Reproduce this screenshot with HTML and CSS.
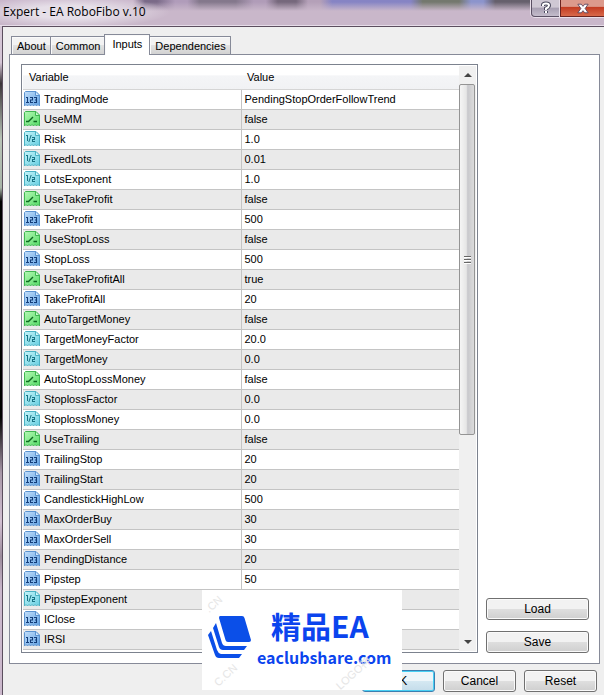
FILE: index.html
```html
<!DOCTYPE html>
<html lang="en">
<head>
<meta charset="utf-8">
<title>Expert - EA RoboFibo v.10</title>
<link rel="stylesheet" href="styles.css">
</head>
<body>
<svg class="defs" width="0" height="0" aria-hidden="true">
  <defs>
    <linearGradient id="g-int" x1="0" y1="0" x2="1" y2="1"><stop offset="0" stop-color="#c3dffa"/><stop offset="1" stop-color="#5fa0e2"/></linearGradient>
    <linearGradient id="g-bool" x1="0" y1="0" x2="1" y2="1"><stop offset="0" stop-color="#b4f7b4"/><stop offset="1" stop-color="#55dc66"/></linearGradient>
    <linearGradient id="g-dbl" x1="0" y1="0" x2="1" y2="1"><stop offset="0" stop-color="#c4f3f8"/><stop offset="1" stop-color="#66cfe2"/></linearGradient>
    <path id="sheet" d="M1.500 .5H12l3.500 3.500V15L14 13.500 12.500 15 11 13.500 9.500 15 8 13.500 6.500 15 5 13.500 3.500 15 2 13.500 .5 15V1.500Z"/>
    <symbol id="int" viewBox="0 0 16 16">
      <use href="#sheet" fill="url(#g-int)" stroke="#5b93d0"/>
      <path d="M11.500 1v3.500H15" fill="#d6eafd" stroke="#5b93d0"/>
      <path d="M2 6h2v5h1v1H2v-1h1V7H2ZM6 6h3v3.500H7V11h2v1H6V8.500h2V7H6ZM10 6h3v6h-3v-1h2V9.500h-1v-1h1V7h-2Z" fill="#123c78"/>
    </symbol>
    <symbol id="bool" viewBox="0 0 16 16">
      <use href="#sheet" fill="url(#g-bool)" stroke="#3fb652"/>
      <path d="M11.500 1v3.500H15" fill="#ccfbd0" stroke="#3fb652"/>
      <path d="M2 10.500h2.500L9 6M9.500 10.500H13" fill="none" stroke="#0c6a20" stroke-width="1.400"/>
    </symbol>
    <symbol id="dbl" viewBox="0 0 16 16">
      <use href="#sheet" fill="url(#g-dbl)" stroke="#4bb2c4"/>
      <path d="M11.500 1v3.500H15" fill="#d8f8fc" stroke="#4bb2c4"/>
      <path d="M2 4h2v6H3V5H2ZM8 6h3v3H9v1h2v1H8V8h2V7H8Z" fill="#187384"/><path d="M4.800 11L7.200 4" stroke="#187384" fill="none"/>
    </symbol>
  </defs>
</svg>
<div class="window">
  <header class="titlebar">
    <h1>Expert - EA RoboFibo v.10</h1>
    <div class="caption">
      <button class="help" aria-label="Help"><svg width="12" height="14" viewBox="0 0 12 14"><path d="M3 5V4Q3 2.500 6 2.500T9 4.500Q9 6 6 7.500V9M6 10v2" fill="none" stroke="#4a4a5e" stroke-width="4"/><path d="M3 5V4Q3 2.500 6 2.500T9 4.500Q9 6 6 7.500V9M6 10v2" fill="none" stroke="#fff" stroke-width="2"/></svg></button>
      <button class="close" aria-label="Close"><svg width="12" height="11" viewBox="0 0 14 12"><path d="M1 1h4l2 2.500L9 1h4L9.500 6 13 11H9L7 8.500 5 11H1L4.500 6Z" fill="#fff" stroke="#54405a"/></svg></button>
    </div>
  </header>
  <main class="client">
    <div class="tabs" role="tablist">
      <button role="tab">About</button>
      <button role="tab">Common</button>
      <button role="tab" class="active" aria-selected="true">Inputs</button>
      <button role="tab">Dependencies</button>
    </div>
    <section class="panel">
      <div class="list">
        <table>
          <thead><tr><th>Variable</th><th>Value</th></tr></thead>
          <tbody>
            <tr><td><svg><use href="#int"/></svg>TradingMode</td><td>PendingStopOrderFollowTrend</td></tr>
            <tr><td><svg><use href="#bool"/></svg>UseMM</td><td>false</td></tr>
            <tr><td><svg><use href="#dbl"/></svg>Risk</td><td>1.0</td></tr>
            <tr><td><svg><use href="#dbl"/></svg>FixedLots</td><td>0.01</td></tr>
            <tr><td><svg><use href="#dbl"/></svg>LotsExponent</td><td>1.0</td></tr>
            <tr><td><svg><use href="#bool"/></svg>UseTakeProfit</td><td>false</td></tr>
            <tr><td><svg><use href="#int"/></svg>TakeProfit</td><td>500</td></tr>
            <tr><td><svg><use href="#bool"/></svg>UseStopLoss</td><td>false</td></tr>
            <tr><td><svg><use href="#int"/></svg>StopLoss</td><td>500</td></tr>
            <tr><td><svg><use href="#bool"/></svg>UseTakeProfitAll</td><td>true</td></tr>
            <tr><td><svg><use href="#int"/></svg>TakeProfitAll</td><td>20</td></tr>
            <tr><td><svg><use href="#bool"/></svg>AutoTargetMoney</td><td>false</td></tr>
            <tr><td><svg><use href="#dbl"/></svg>TargetMoneyFactor</td><td>20.0</td></tr>
            <tr><td><svg><use href="#dbl"/></svg>TargetMoney</td><td>0.0</td></tr>
            <tr><td><svg><use href="#bool"/></svg>AutoStopLossMoney</td><td>false</td></tr>
            <tr><td><svg><use href="#dbl"/></svg>StoplossFactor</td><td>0.0</td></tr>
            <tr><td><svg><use href="#dbl"/></svg>StoplossMoney</td><td>0.0</td></tr>
            <tr><td><svg><use href="#bool"/></svg>UseTrailing</td><td>false</td></tr>
            <tr><td><svg><use href="#int"/></svg>TrailingStop</td><td>20</td></tr>
            <tr><td><svg><use href="#int"/></svg>TrailingStart</td><td>20</td></tr>
            <tr><td><svg><use href="#int"/></svg>CandlestickHighLow</td><td>500</td></tr>
            <tr><td><svg><use href="#int"/></svg>MaxOrderBuy</td><td>30</td></tr>
            <tr><td><svg><use href="#int"/></svg>MaxOrderSell</td><td>30</td></tr>
            <tr><td><svg><use href="#int"/></svg>PendingDistance</td><td>20</td></tr>
            <tr><td><svg><use href="#int"/></svg>Pipstep</td><td>50</td></tr>
            <tr><td><svg><use href="#dbl"/></svg>PipstepExponent</td><td></td></tr>
            <tr><td><svg><use href="#int"/></svg>IClose</td><td></td></tr>
            <tr><td><svg><use href="#int"/></svg>IRSI</td><td></td></tr>
          </tbody>
        </table>
        <div class="scrollbar">
          <button class="arrow" aria-label="Scroll up"><svg width="8" height="4" viewBox="0 0 8 4"><path d="M0 4L4 0l4 4Z" fill="#444"/></svg></button>
          <div class="track"><div class="thumb"><i></i><i></i><i></i></div></div>
          <button class="arrow" aria-label="Scroll down"><svg width="8" height="4" viewBox="0 0 8 4"><path d="M0 0h8L4 4Z" fill="#444"/></svg></button>
        </div>
      </div>
      <div class="side">
        <button class="btn">Load</button>
        <button class="btn">Save</button>
      </div>
    </section>
    <footer class="actions">
      <button class="btn default">OK</button>
      <button class="btn">Cancel</button>
      <button class="btn">Reset</button>
    </footer>
  </main>
  <aside class="badge">
    <svg width="44" height="44" viewBox="0 0 44 44" fill="#0b4fe8"><path d="M12 1H34q2 0 2.500 2L43 25q0 2-2 2H20q-2 0-2.500-2L11 3q0-2 1-2Z"/><path d="M8 8L14 28q1 3 4 3H39l-3 4H15q-3 0-4-3L5 13Z"/><path d="M3 16L9 35q1 3 4 4H34l-3 4H11q-3 0-4-3L0 20Z"/></svg>
    <div class="brand"><strong>精品EA</strong><span>eaclubshare.com</span></div>
    <small class="m1">.CN</small><small class="m2">C.CN</small><small class="m3">LOGO神</small>
  </aside>
</div>
</body>
</html>
```

FILE: styles.css
```css
* { box-sizing: border-box; }
body {
  margin: 0;
  font: 11px/14px "Liberation Sans", Arial, sans-serif;
  color: #000;
}
button { font: inherit; color: inherit; padding: 0; margin: 0; }
.defs { position: absolute; }
.window {
  position: relative;
  display: flex;
  flex-direction: column;
  min-height: 100vh;
  padding-left: 2px;
  background: linear-gradient(#d5c6d6 9%, #3a3438 12%, #b9c4b8 20%, #a8b4a8 27%, #000 29%, #000 60%, #a898a8 68%, #d2c0d2 75%, #9c8c9c 80%, #cbb8cc 85%);
}
.titlebar {
  display: flex;
  justify-content: space-between;
  height: 26px;
  margin-left: -2px;
  padding-left: 3px;
  border-bottom: 1px solid #e6dce8;
  background:
    radial-gradient(ellipse 100px 16px at 70px 12px, #e6dfe8 40%, transparent),
    linear-gradient(transparent 2px, #c9b7ca 11px),
    linear-gradient(90deg, #c9b6cb 0 22%, #7a6a88 24% 26%, #b09cba 29% 31%, #84788c 33% 39%, #b09cb8 42% 44%, #76687c 46% 49%, #b4a0b8 51% 53%, #8684c4 55% 68%, #74786e 70% 76%, #8c94cc 78% 80%, #66606c 82% 88%, #cfc2d2);
}
.titlebar h1 {
  margin: 3px 0 0;
  font: 12px/18px "Open Sans", sans-serif;
}
.caption { display: flex; height: 17px; }
.caption button {
  display: flex;
  align-items: center;
  justify-content: center;
  border: 1px solid #5a5064;
  border-top: 0;
  box-shadow: 0 0 0 1px #e8dfea;
}
.caption .help {
  width: 29px;
  border-radius: 0 0 0 4px;
  background: linear-gradient(#cfc8d4 45%, #a79fb2 50%, #c4bccb);
}
.caption .close {
  width: 44px;
  border-right: 0;
  border-color: #6a2420;
  background: linear-gradient(#dc9a8c 40%, #c23c22 45%, #d8694a);
}
.client {
  flex: 1;
  display: flex;
  flex-direction: column;
  border: solid #5b4e5e;
  border-width: 1px 0 0 1px;
  padding: 7px 4px 3px 6px;
  background: #efefef;
}
.tabs { display: flex; align-items: flex-end; padding-left: 2px; height: 20px; }
.tabs button {
  height: 18px;
  padding: 0 4px 0 5px;
  border: 1px solid #868a98;
  border-bottom: 0;
  box-shadow: inset 1px 1px #fafafa;
  background: linear-gradient(#f3f3f3 45%, #e2e2e2 50%, #d2d2d2);
}
.tabs button + button { margin-left: -1px; }
.tabs .active {
  position: relative;
  height: 21px;
  margin-bottom: -1px;
  padding: 0 7px 2px;
  background: #fff;
}
.panel {
  flex: 1;
  display: flex;
  gap: 8px;
  border: 1px solid #868a98;
  padding: 9px 10px 10px 11px;
  background: #fff;
}
.list {
  flex: 1;
  display: flex;
  border: 1px solid #7c828e;
  padding: 1px;
}
table {
  flex: 1;
  table-layout: fixed;
  border-collapse: collapse;
  align-self: flex-start;
}
th {
  height: 23px;
  padding: 0 6px;
  text-align: left;
  font-weight: 400;
  background: linear-gradient(#fff 40%, #f4f5f7 42%, #f1f2f4);
  border-bottom: 1px solid #d5d5d5;
}
th:first-child { width: 50%; }
td {
  height: 20px;
  padding: 0 3px;
  border-bottom: 1px solid #c4c4c4;
}
td + td { border-left: 1px solid #c4c4c4; }
tbody tr:nth-child(even) { background: #eaeaea; }
td svg { width: 16px; height: 16px; margin: 0 4px 0 -2px; vertical-align: -4px; }
.scrollbar {
  display: flex;
  flex-direction: column;
  width: 17px;
  background: #f0f0f0;
}
.arrow {
  display: flex;
  align-items: center;
  justify-content: center;
  height: 18px;
  border: 0;
  background: #f0f0f0;
}
.track { flex: 1; }
.thumb {
  display: flex;
  flex-direction: column;
  align-items: center;
  justify-content: center;
  gap: 1px;
  height: 64%;
  margin-right: 1px;
  border: 1px solid #949494;
  border-radius: 2px;
  background: linear-gradient(90deg, #f5f5f5, #e6e6e6 45%, #c8c8cc 55%, #dcdcdc);
}
.thumb i { width: 7px; height: 2px; background: #666; border-bottom: 1px solid #fff; }
.side {
  display: flex;
  flex-direction: column;
  justify-content: flex-end;
  gap: 11px;
  width: 103px;
}
.btn {
  height: 22px;
  font-size: 12px;
  border: 1px solid #707070;
  border-radius: 3px;
  box-shadow: inset 0 0 0 1px #fafafa;
  background: linear-gradient(#f2f2f2 48%, #dedede 52%, #cfcfcf);
}
.actions { display: flex; justify-content: flex-end; gap: 8px; padding: 6px 3px 0 0; }
.actions .btn { width: 73px; }
.btn.default {
  border-color: #3c7fb1;
  box-shadow: inset 0 0 0 1px #48d0f4;
  background: linear-gradient(#eef6fa 48%, #d4e8f2 52%, #c4dcea);
}
.badge {
  position: absolute;
  left: 202px;
  top: 590px;
  width: 200px;
  height: 100px;
  display: flex;
  gap: 5px;
  padding: 14px 0 0 6px;
  overflow: hidden;
  background: #fff;
  color: #0b44ee;
}
.badge > svg { margin-top: 11px; }
.brand { display: flex; flex-direction: column; }
.brand strong { font: 700 30px/42px "Noto Sans CJK SC", sans-serif; padding-left: 14px; }
.brand span { font: 700 16px/22px "Noto Sans CJK SC", sans-serif; }
.badge small {
  position: absolute;
  font: 11px/12px "Liberation Sans", "Noto Sans CJK SC", sans-serif;
  color: #e6e6e6;
  transform: rotate(-42deg);
}
.m1 { left: 2px; top: 8px; }
.m2 { left: 10px; top: 79px; }
.m3 { left: 130px; top: 77px; font-size: 9px; }
```
